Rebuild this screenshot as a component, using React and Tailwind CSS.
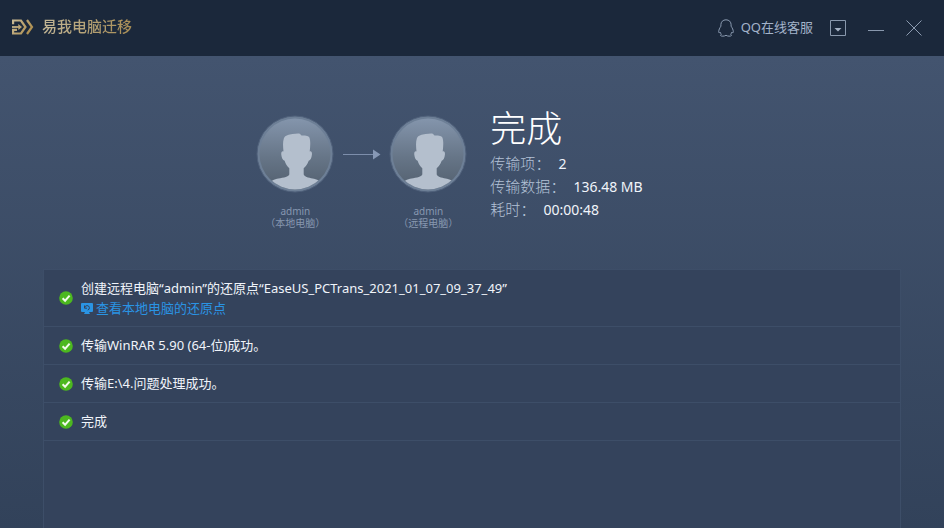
import React from "react";

function Logo() {
  return (
    <svg width="22" height="16" viewBox="0 0 22 16" fill="none" aria-hidden="true">
      <defs>
        <linearGradient id="gold" x1="0" y1="0" x2="22" y2="16" gradientUnits="userSpaceOnUse">
          <stop offset="0" stopColor="#c9bb98" />
          <stop offset="1" stopColor="#a8853f" />
        </linearGradient>
      </defs>
      <path d="M1.100 5.200V1.500H9L13.500 8 9 14.500H1.100v-3.700H5" stroke="url(#gold)" strokeWidth="2.2" />
      <path d="M0 8h7" stroke="url(#gold)" strokeWidth="1.800" />
      <path d="M6.300 5 10 8l-3.700 3z" fill="url(#gold)" />
      <path d="M15 1l5 7-5 7" stroke="url(#gold)" strokeWidth="2.2" />
    </svg>
  );
}

function Penguin() {
  return (
    <svg width="16" height="18" viewBox="0 0 16 18" fill="none" stroke="#8c9cb2" strokeWidth="1" strokeLinejoin="round" aria-hidden="true">
      <path d="M8 .8C4.900.8 2.900 2.900 2.900 5.700v1.500C1.700 9 .7 10.900.7 12.700c0 1.300.6 1.500 1.400.4.300 1 .7 1.700 1.300 2.200-.9.400-1.100.9-.8 1.300.6.800 3.800.8 5.400-.3 1.600 1.100 4.800 1.100 5.400.3.300-.4.100-.9-.8-1.300.6-.5 1-1.200 1.300-2.200.8 1.100 1.400.9 1.400-.4 0-1.800-1-3.700-2.200-5.500V5.700C13.100 2.900 11.100.8 8 .8z" />
    </svg>
  );
}

function Avatar({ id }) {
  const bg = "bg-" + id;
  const clip = "clip-" + id;
  return (
    <svg width="78" height="78" viewBox="0 0 78 78" aria-hidden="true">
      <defs>
        <linearGradient id={bg} x1="0" y1="0" x2="0" y2="1">
          <stop offset="0" stopColor="#8495ac" />
          <stop offset="0.55" stopColor="#667587" />
          <stop offset="1" stopColor="#525f6e" />
        </linearGradient>
        <clipPath id={clip}>
          <circle cx="39" cy="39" r="35.500" />
        </clipPath>
      </defs>
      <circle cx="39" cy="39" r="38" fill="#6d7f96" stroke="#50617b" strokeWidth="1" />
      <circle cx="39" cy="39" r="35.500" fill={"url(#" + bg + ")"} />
      <path
        clipPath={"url(#" + clip + ")"}
        fill="#b4bfcd"
        d="M27.500 36.500c-.5-4.500-.9-9.500.4-13.200 1.300-3 5.100-3.800 8.600-4.200 2.500-.3 5.500-1 7.300-.4.700.4 1 1.300 1.700 1.700 3 .1 6.500-.3 7.900 2 1.400 4 .8 9.600.3 14.100 1.700-.6 2.500.9 2.200 3.300-.4 3-1.300 5.700-3.200 5.900-1 3-2.900 5.600-5 7.600v6.200c1.200 3 6.800 3.300 10.300 4.300 2.200.5 4 1.200 6 2.700v11.500H15V66.500c2-1.500 3.800-2.200 6-2.700 3.500-1 11.300-1.300 12.300-4.300v-6.200c-2.100-2-3.700-4.600-4.700-7.600-1.900-.2-2.900-2.900-3.300-5.900-.3-2.400.5-3.900 2.200-3.300z"
      />
    </svg>
  );
}

function Computer({ id, name, place }) {
  return (
    <figure className="flex w-[78px] flex-col items-center">
      <Avatar id={id} />
      <figcaption className="mt-3 text-center text-[10px] leading-3 whitespace-nowrap text-[#8797b0]">
        {name}
        <br />（{place}）
      </figcaption>
    </figure>
  );
}

function Stat({ label, value }) {
  return (
    <div className="flex h-[23px] items-center">
      <dt className="text-[15px] font-light text-[#b3c1d6]">{label}：</dt>
      <dd className="ml-2 text-sm text-[#f0f4fa]">{value}</dd>
    </div>
  );
}

function Check() {
  return (
    <svg className="shrink-0" width="14" height="14" viewBox="0 0 14 14" role="img" aria-label="成功">
      <circle cx="7" cy="7" r="6.800" fill="#4cb81f" />
      <path d="M3.600 7.200l2.500 2.500 4.500-5" fill="none" stroke="#f2fbea" strokeWidth="2" />
    </svg>
  );
}

function Row({ children }) {
  return (
    <li className="flex items-center gap-2 border-b border-[#3d4e68] px-[15px] py-2 text-[13px] leading-[21px] text-[#f0f4fa]">
      <Check />
      <div>{children}</div>
    </li>
  );
}

export default function App() {
  return (
    <div className="flex min-h-screen flex-col bg-[#1b283b] font-['Noto_Sans','Noto_Sans_CJK_SC',sans-serif]">
      <header className="flex h-14 items-center justify-between pr-[22px] pl-3">
        <div className="flex items-center gap-2 pb-[3px]">
          <Logo />
          <h1 className="bg-linear-to-r from-[#c3b797] to-[#a88d55] bg-clip-text text-[15px] font-medium text-transparent">易我电脑迁移</h1>
        </div>
        <div className="flex items-center">
          <a href="#service" className="flex items-center gap-[7px] text-[13px] text-[#a3b3ca]">
            <Penguin />
            QQ在线客服
          </a>
          <button type="button" aria-label="菜单" className="ml-[17px]">
            <svg width="16" height="16" viewBox="0 0 16 16" fill="none" aria-hidden="true">
              <path d="M.5.5h15v15H.5z" stroke="#8998ad" />
              <path d="M4.500 8h7L8 11.500z" fill="#a3b0c3" />
            </svg>
          </button>
          <button type="button" aria-label="最小化" className="ml-[22px]">
            <svg width="16" height="16" viewBox="0 0 16 16" aria-hidden="true">
              <path d="M0 10.500h16" stroke="#8998ad" />
            </svg>
          </button>
          <button type="button" aria-label="关闭" className="ml-[22px]">
            <svg width="16" height="16" viewBox="0 0 16 16" aria-hidden="true">
              <path d="M.5.5l15 15M15.500.5l-15 15" stroke="#8c9bb0" />
            </svg>
          </button>
        </div>
      </header>

      <main className="flex grow flex-col bg-linear-to-b from-[#43546f] to-[#32425a] px-[43px]">
        <section className="flex justify-center pt-[50px] pr-[45px] pb-10">
          <div className="flex gap-2 pt-[9px]">
            <Computer id="local" name="admin" place="本地电脑" />
            <svg className="mt-[33px]" width="39" height="12" viewBox="0 0 39 12" aria-hidden="true">
              <path d="M1 6.500h31" stroke="#7d8eab" />
              <path d="M31 1.500l7.500 5-7.500 5z" fill="#8798b5" />
            </svg>
            <Computer id="remote" name="admin" place="远程电脑" />
          </div>
          <div className="ml-[23px]">
            <h2 className="text-4xl leading-[46px] font-light text-white">完成</h2>
            <dl>
              <Stat label="传输项" value="2" />
              <Stat label="传输数据" value="136.48 MB" />
              <Stat label="耗时" value="00:00:48" />
            </dl>
          </div>
        </section>

        <ul className="grow border border-b-0 border-[#3d4e68] bg-[#34435c]">
          <Row>
            <p className="leading-5">创建远程电脑“admin”的还原点“EaseUS_PCTrans_2021_01_07_09_37_49”</p>
            <a href="#restore" className="flex items-center gap-[3px] leading-5 text-[#2a94e4]">
              <svg width="12" height="11" viewBox="0 0 12 11" aria-hidden="true">
                <path d="M1 0h10a1 1 0 0 1 1 1v7a1 1 0 0 1-1 1H8l1 2H3l1-2H1a1 1 0 0 1-1-1V1a1 1 0 0 1 1-1z" fill="#2a94e4" />
                <path d="M3.500 2.500v2.700h2.500M3.800 4.700a2.300 2.300 0 1 1 2.900 2.400" fill="none" stroke="#34435c" strokeWidth="1" />
              </svg>
              查看本地电脑的还原点
            </a>
          </Row>
          <Row>传输WinRAR 5.90 (64-位)成功。</Row>
          <Row>传输E:\4.问题处理成功。</Row>
          <Row>完成</Row>
        </ul>
      </main>
    </div>
  );
}
